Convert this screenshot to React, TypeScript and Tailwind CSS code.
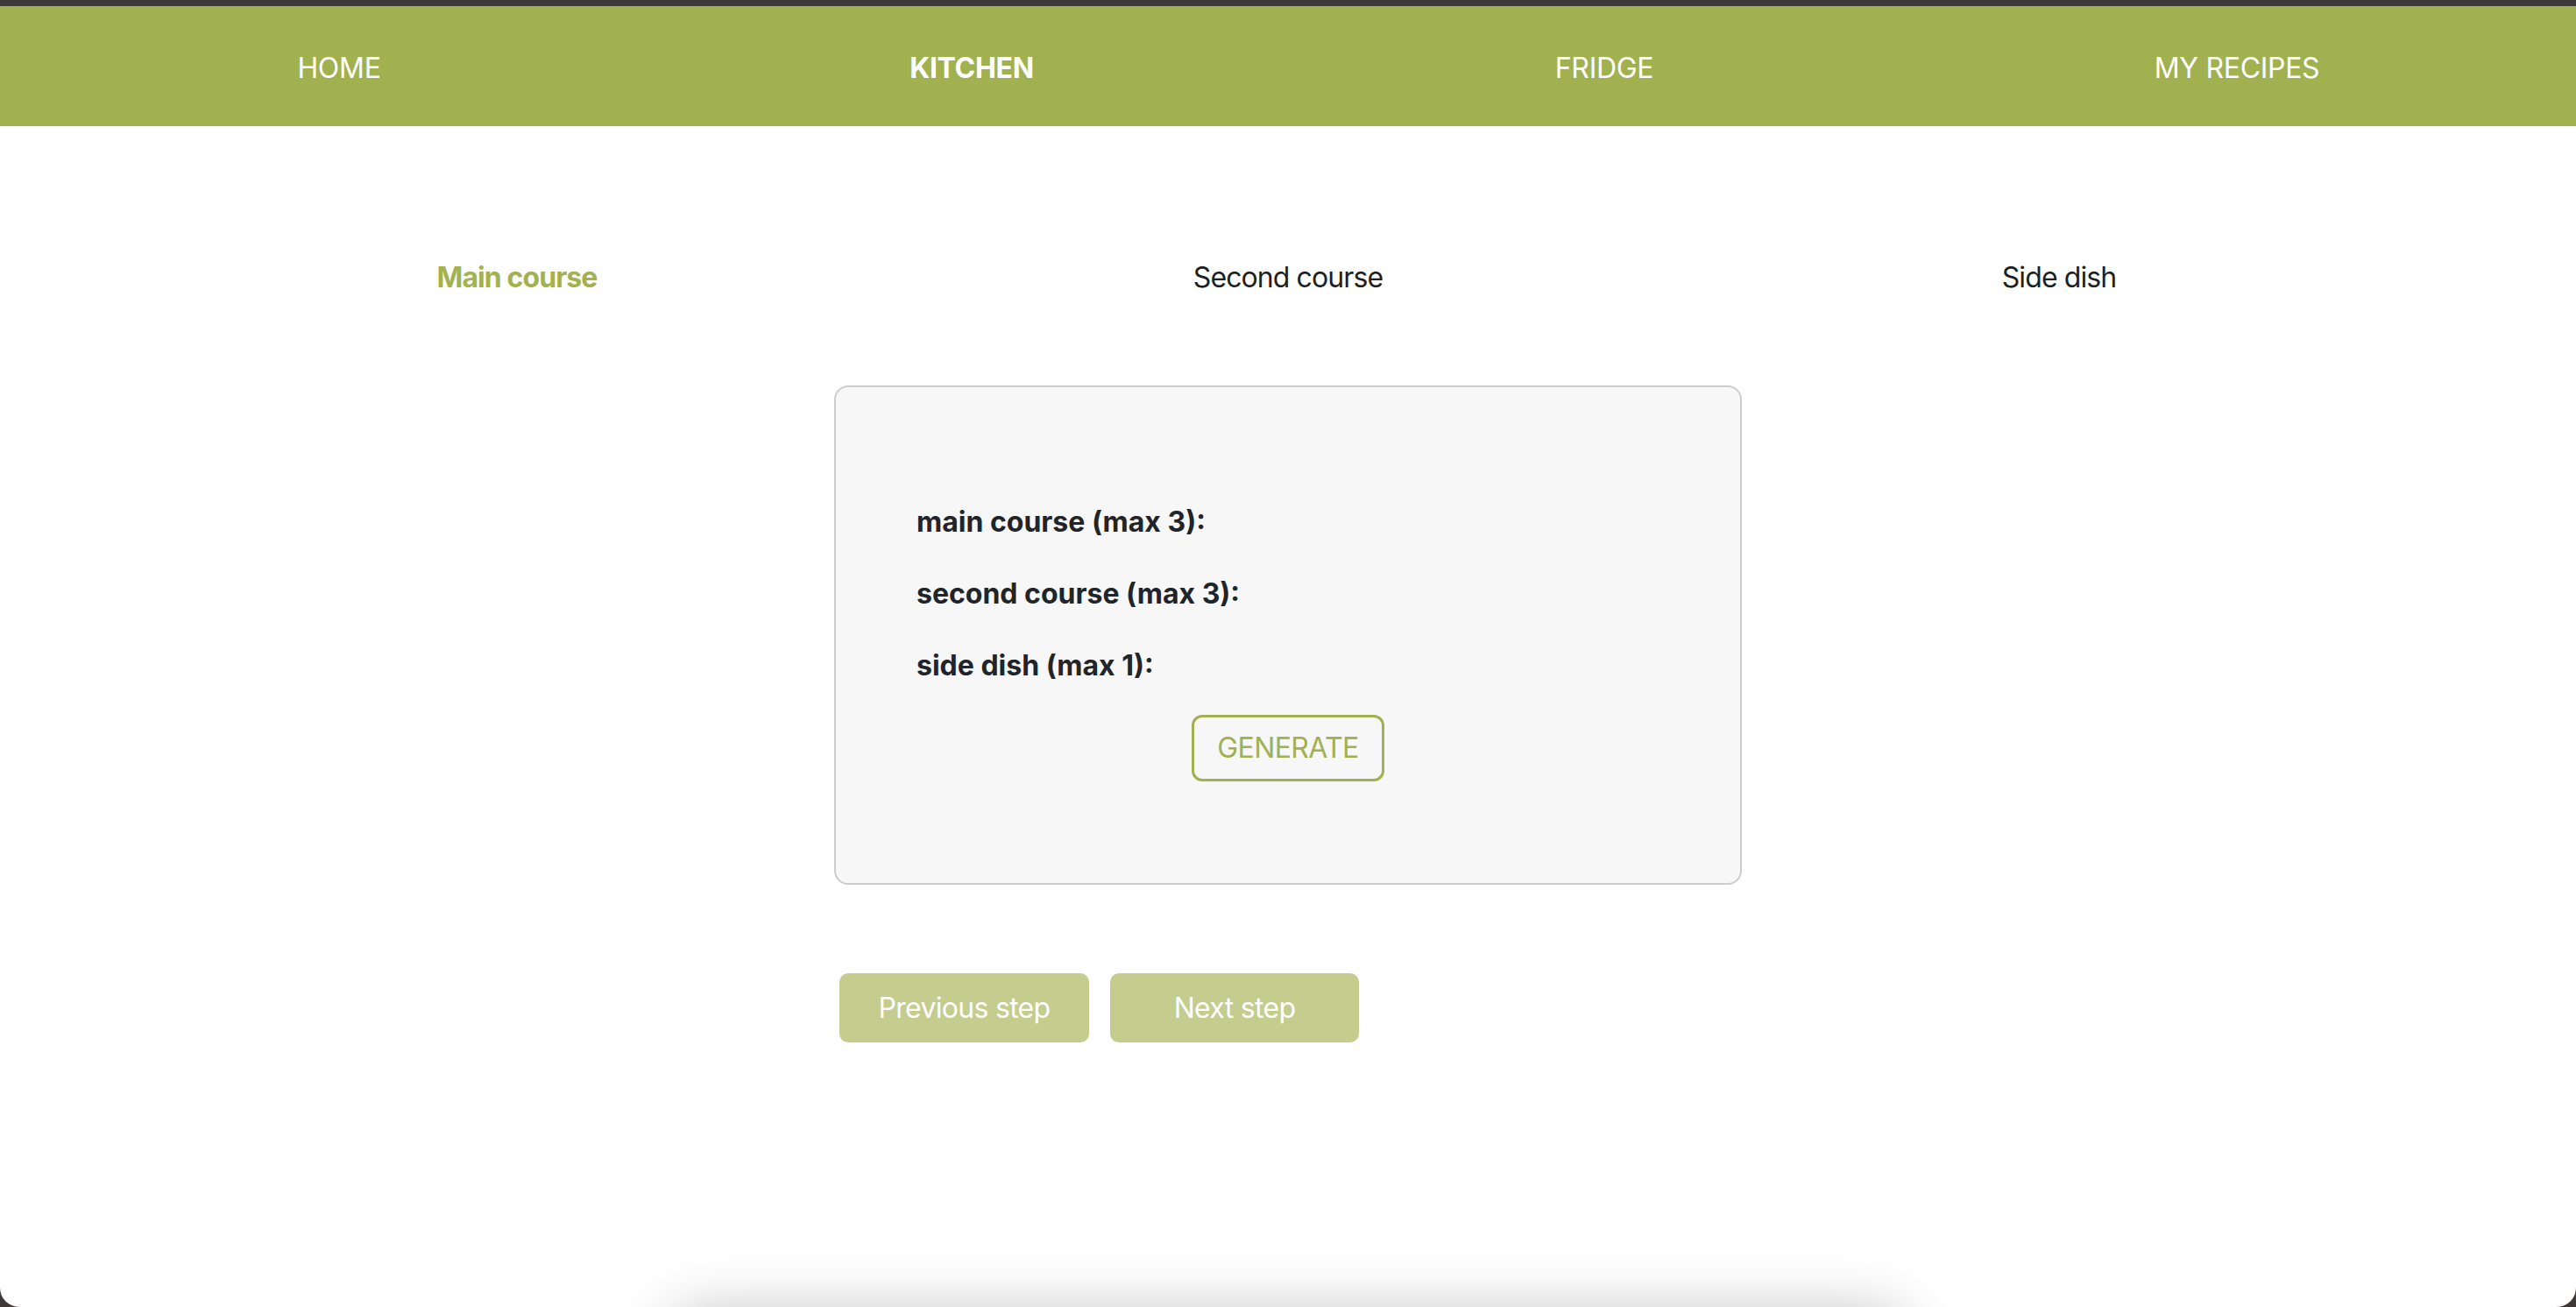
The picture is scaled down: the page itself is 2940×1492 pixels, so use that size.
import { useState } from 'react';

const NAV_ITEMS = ['HOME', 'KITCHEN', 'FRIDGE', 'MY RECIPES'];
const STEPS = ['Main course', 'Second course', 'Side dish'];
const FIELDS = ['main course (max 3):', 'second course (max 3):', 'side dish (max 1):'];

export default function App() {
  const [active] = useState('KITCHEN');
  const [step, setStep] = useState(0);

  return (
    <div className="h-[1492px] bg-[#3f3839] pt-[7px] font-['Inter',sans-serif] overflow-hidden">
      <div className="bg-white rounded-b-[22px] overflow-hidden h-[1485px] flex flex-col">
        {/* top navigation */}
        <nav className="h-[137px] shrink-0 bg-[#a2b14f] grid grid-cols-4 px-[26px] items-center text-center text-white text-[32px] tracking-[-0.3px] pt-[4px]">
          {NAV_ITEMS.map(item => (
            <a key={item} className="cursor-pointer" style={{ fontWeight: item === active ? 700 : 400 }}>
              {item}
            </a>
          ))}
        </nav>

        {/* step tabs */}
        <div className="grid grid-cols-3 px-[150px] mt-[149px] text-center text-[32px] leading-[48px] tracking-[-0.9px]">
          {STEPS.map((s, i) => (
            <button
              key={s}
              onClick={() => setStep(i)}
              className={i === step ? 'text-[#a3b14f] font-bold' : 'text-[#1f1f1f]'}
            >
              {s}
            </button>
          ))}
        </div>

        {/* selection card */}
        <div className="w-[1036px] h-[570px] mx-auto mt-[99px] shrink-0 border-2 border-[#cccccc] rounded-[16px] bg-[#f7f7f7] pt-[130px] px-[92px]">
          <div className="flex flex-col gap-[34px] text-[32px] leading-[48px] font-bold text-[#212529]">
            {FIELDS.map(f => (
              <label key={f}>{f}</label>
            ))}
          </div>
          <div className="flex justify-center mt-[32px]">
            <button className="border-[3px] border-[#a3b04f] rounded-[12px] px-[26px] py-[11px] text-[32px] leading-[48px] tracking-[-0.6px] text-[#a2b14f]">
              GENERATE
            </button>
          </div>
        </div>

        {/* step buttons */}
        <div className="w-[1036px] mx-auto mt-[101px] pl-[6px] flex gap-[24px] shrink-0 tracking-[-0.7px]">
          <button
            onClick={() => setStep(Math.max(0, step - 1))}
            className="w-[285px] h-[79px] rounded-[10px] bg-[#c4cc8e] text-white text-[32px]"
          >
            Previous step
          </button>
          <button
            onClick={() => setStep(Math.min(2, step + 1))}
            className="w-[284px] h-[79px] rounded-[10px] bg-[#c4cc8e] text-white text-[32px]"
          >
            Next step
          </button>
        </div>

        {/* footer card below the fold, only its shadow shows */}
        <div className="mt-auto mb-[-110px] h-[100px] w-[1400px] mx-auto shrink-0 bg-white rounded-[20px] shadow-[0_0_70px_rgba(0,0,0,0.28)]" />
      </div>
    </div>
  );
}
